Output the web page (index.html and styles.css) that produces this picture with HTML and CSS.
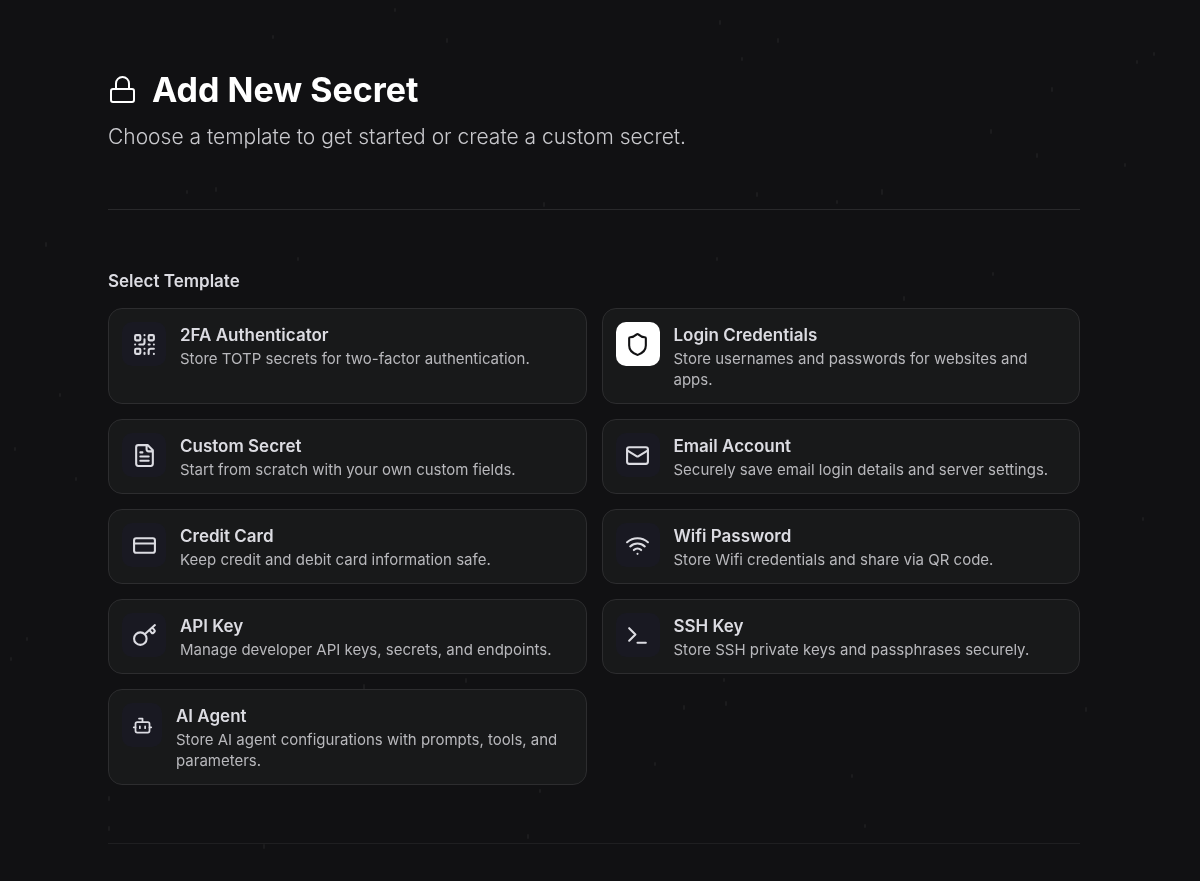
FILE: index.html
```html
<!DOCTYPE html>
<html lang="en">
<head>
    <meta charset="UTF-8">
    <meta name="viewport" content="width=device-width, initial-scale=1.0">
    <title>Add New Secret</title>
    <link rel="stylesheet" href="styles.css">
</head>
<body>
    <!-- faint stars behind the page -->
    <svg class="stars" viewBox="0 0 1200 881" preserveAspectRatio="xMidYMid slice" aria-hidden="true">
        <path d="M395 9v2M273 36v2M447 39v3M720 21v3M778 39v3M742 58v2M1154 53v2M1137 61v2M1052 88v3M991 130v3M1037 154v3M1125 164v2M757 193v3M837 201v2M882 190v4M544 203v3M216 188v3M187 191v2M46 243v3M298 258v2M717 258v2M993 273v2M904 297v3M364 685v4M466 679v3M684 706v3M724 679v2M726 702v3M655 763v2M852 775v2M1086 708v3M109 797v3M109 827v3M264 845v3M540 790v2M528 835v3M865 825v2M76 478v2M15 448v2M11 658v2M27 638v2M1143 518v2M60 394v2"/>
    </svg>

    <main class="page">
        <header class="page-header">
            <div class="page-title">
                <svg class="lock" viewBox="0 0 28 30" aria-hidden="true">
                    <rect x="3" y="14" width="23" height="13" rx="2"/>
                    <path d="M8 14V8.500a6.500 6.500 0 0 1 13 0V14"/>
                </svg>
                <h1>Add New Secret</h1>
            </div>
            <p class="subtitle">Choose a template to get started or create a custom secret.</p>
        </header>

        <section class="templates">
            <h2>Select Template</h2>
            <div class="template-grid">
                <button type="button" class="template">
                    <span class="template-icon">
                        <svg viewBox="0 0 24 24"><rect width="5" height="5" x="3" y="3" rx="1"/><rect width="5" height="5" x="16" y="3" rx="1"/><rect width="5" height="5" x="3" y="16" rx="1"/><path d="M21 16h-3a2 2 0 0 0-2 2v3M21 21v.01M12 7v3a2 2 0 0 1-2 2H7M3 12h.01M12 3h.01M12 16v.01M16 12h1M21 12v.01M12 21v-1"/></svg>
                    </span>
                    <span class="template-text">
                        <span class="template-name">2FA Authenticator</span>
                        <span class="template-desc">Store TOTP secrets for two-factor authentication.</span>
                    </span>
                </button>
                <button type="button" class="template selected" aria-pressed="true">
                    <span class="template-icon">
                        <svg viewBox="0 0 24 24"><path d="M20 13c0 5-3.500 7.500-7.660 8.950a1 1 0 0 1-.67-.01C7.500 20.500 4 18 4 13V6a1 1 0 0 1 1-1c2 0 4.500-1.200 6.240-2.720a1.170 1.170 0 0 1 1.520 0C14.510 3.810 17 5 19 5a1 1 0 0 1 1 1z"/></svg>
                    </span>
                    <span class="template-text">
                        <span class="template-name">Login Credentials</span>
                        <span class="template-desc">Store usernames and passwords for websites and apps.</span>
                    </span>
                </button>
                <button type="button" class="template">
                    <span class="template-icon">
                        <svg viewBox="0 0 24 24"><path d="M15 2H6a2 2 0 0 0-2 2v16a2 2 0 0 0 2 2h12a2 2 0 0 0 2-2V7zM14 2v4a2 2 0 0 0 2 2h4M10 9H8M16 13H8M16 17H8"/></svg>
                    </span>
                    <span class="template-text">
                        <span class="template-name">Custom Secret</span>
                        <span class="template-desc">Start from scratch with your own custom fields.</span>
                    </span>
                </button>
                <button type="button" class="template">
                    <span class="template-icon">
                        <svg viewBox="0 0 24 24"><rect width="20" height="16" x="2" y="4" rx="2"/><path d="m22 7-8.970 5.700a1.940 1.940 0 0 1-2.060 0L2 7"/></svg>
                    </span>
                    <span class="template-text">
                        <span class="template-name">Email Account</span>
                        <span class="template-desc">Securely save email login details and server settings.</span>
                    </span>
                </button>
                <button type="button" class="template">
                    <span class="template-icon">
                        <svg viewBox="0 0 24 24"><rect width="20" height="14" x="2" y="5" rx="2"/><path d="M2 10h20"/></svg>
                    </span>
                    <span class="template-text">
                        <span class="template-name">Credit Card</span>
                        <span class="template-desc">Keep credit and debit card information safe.</span>
                    </span>
                </button>
                <button type="button" class="template">
                    <span class="template-icon">
                        <svg viewBox="0 0 24 24"><path d="M12 20h.01M2 8.820a15 15 0 0 1 20 0M5 12.859a10 10 0 0 1 14 0M8.500 16.429a5 5 0 0 1 7 0"/></svg>
                    </span>
                    <span class="template-text">
                        <span class="template-name">Wifi Password</span>
                        <span class="template-desc">Store Wifi credentials and share via QR code.</span>
                    </span>
                </button>
                <button type="button" class="template">
                    <span class="template-icon">
                        <svg viewBox="0 0 24 24"><circle cx="8" cy="15" r="6"/><path d="M12.500 10.500 22 2M17 7l2 2.500a1 1 0 0 0 1.400 0l1.200-1.200a1 1 0 0 0 0-1.400L19.500 4.500"/></svg>
                    </span>
                    <span class="template-text">
                        <span class="template-name">API Key</span>
                        <span class="template-desc">Manage developer API keys, secrets, and endpoints.</span>
                    </span>
                </button>
                <button type="button" class="template">
                    <span class="template-icon">
                        <svg viewBox="0 0 24 24"><path d="m4 17 6-6-6-6M12 19h8"/></svg>
                    </span>
                    <span class="template-text">
                        <span class="template-name">SSH Key</span>
                        <span class="template-desc">Store SSH private keys and passphrases securely.</span>
                    </span>
                </button>
                <button type="button" class="template compact">
                    <span class="template-icon">
                        <svg viewBox="0 0 24 24"><path d="M12 8V4H8M2 14h2M20 14h2M15 13v2M9 13v2"/><rect width="16" height="12" x="4" y="8" rx="2"/></svg>
                    </span>
                    <span class="template-text">
                        <span class="template-name">AI Agent</span>
                        <span class="template-desc">Store AI agent configurations with prompts, tools, and parameters.</span>
                    </span>
                </button>
            </div>
        </section>
    </main>
</body>
</html>
```
FILE: styles.css
```css
* {
    box-sizing: border-box;
}
body {
    margin: 0;
    min-height: 100vh;
    background-color: #111113;
    color: #dcdce2;
    font-family: Inter, "Liberation Sans", sans-serif;
}
h1, h2, p {
    margin: 0;
}
svg {
    fill: none;
    stroke: currentColor;
    stroke-width: 2;
    stroke-linecap: round;
    stroke-linejoin: round;
}
.stars {
    position: fixed;
    top: 0;
    left: 0;
    width: 100%;
    height: 100%;
    z-index: -1;
    color: #1c1c1e;
}
.page {
    padding: 68px 10% 36px 9%;
}
.page-header {
    padding-bottom: 58px;
    border-bottom: 1px solid #29292b;
}
.page-title {
    display: flex;
    align-items: center;
    gap: 16px;
    color: #fff;
}
.lock {
    width: 28px;
    height: 30px;
}
h1 {
    font-size: 34px;
    line-height: 44px;
    font-weight: 700;
}
.subtitle {
    margin-top: 10px;
    font-size: 21px;
    line-height: 29px;
    font-weight: 300;
    color: #c8c8cc;
}
.templates {
    padding: 58px 0;
    border-bottom: 1px solid #1f1f21;
}
h2 {
    margin-bottom: 14px;
    font-size: 17px;
    line-height: 26px;
    font-weight: 600;
}
.template-grid {
    display: grid;
    grid-template-columns: 1fr 1fr;
    gap: 15px;
}
.template {
    display: flex;
    align-items: flex-start;
    gap: 14px;
    padding: 13px 20px 13px 13px;
    border: 1px solid #2d2d2f;
    border-radius: 14px;
    background-color: #18191a;
    color: inherit;
    font-family: inherit;
    text-align: left;
    cursor: pointer;
}
.template:hover {
    background-color: #1d1e20;
}
.template-icon {
    display: flex;
    flex-shrink: 0;
    align-items: center;
    justify-content: center;
    width: 44px;
    height: 44px;
    border-radius: 10px;
    background-color: #191922;
}
.template-icon svg {
    width: 25px;
    height: 25px;
}
.selected .template-icon {
    background-color: #fff;
    color: #111113;
}
.compact .template-icon {
    width: 40px;
}
.compact .template-icon svg {
    width: 21px;
    height: 21px;
}
.template-name {
    display: block;
    font-size: 17px;
    line-height: 26px;
    font-weight: 600;
}
.template-desc {
    display: block;
    font-size: 15px;
    line-height: 21px;
    font-weight: 400;
    color: #b8b8bc;
}
```
